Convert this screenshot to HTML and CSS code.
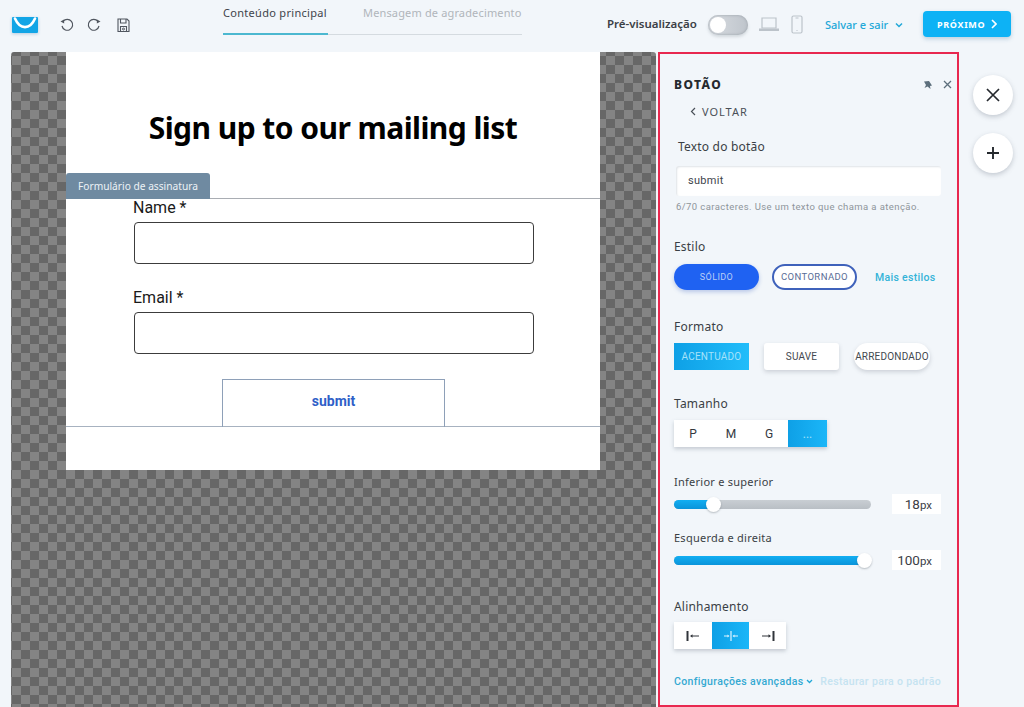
FILE: index.html
```html
<!DOCTYPE html>
<html lang="pt-BR">
<head>
    <meta charset="UTF-8">
    <meta name="viewport" content="width=device-width, initial-scale=1.0">
    <title>Editor de formulário</title>
    <link rel="stylesheet" href="styles.css">
</head>
<body>
    <header class="topbar">
        <div class="tools">
            <svg class="logo" width="26" height="16" viewBox="0 0 26 16"><rect width="26" height="16" rx="1" fill="#12a5e6"/><path d="M3 1.500C8 13 18 13 23 1.500" fill="none" stroke="#fff" stroke-width="2.600" stroke-linecap="round"/></svg>
            <svg class="undo" width="16" height="16" viewBox="0 0 16 16"><path d="M4 4.500a5.400 5.400 0 1 1-1 4.500" fill="none" stroke="#50565f" stroke-width="1.200"/><path d="M1.500 4.500 5 2.600 5.200 6.600z" fill="#50565f"/></svg>
            <svg class="redo" width="16" height="16" viewBox="0 0 16 16"><path d="M12 4.500a5.400 5.400 0 1 0 1 4.500" fill="none" stroke="#50565f" stroke-width="1.200"/><path d="M14.500 4.500 11 2.600 10.800 6.600z" fill="#50565f"/></svg>
            <svg class="save" width="13" height="15" viewBox="0 0 13 15"><path d="M1 1h9l2 2v10.500H1z M3.500 1v4H9V1 M3.500 13.500V8.500h6v5" fill="none" stroke="#50565f" stroke-width="1.100"/><circle cx="6.500" cy="11" r="1" fill="none" stroke="#50565f"/></svg>
        </div>
        <nav class="steps">
            <a class="step active">Conteúdo principal</a>
            <a class="step">Mensagem de agradecimento</a>
        </nav>
        <div class="actions">
            <span class="preview-label">Pré-visualização</span>
            <span class="switch"><span class="knob"></span></span>
            <svg class="laptop" width="20" height="14" viewBox="0 0 20 14"><path d="M3 1h14v10H3z" fill="none" stroke="#bcc3ca" stroke-width="1.200"/><path d="M0 11.500h20V14H0z" fill="#bcc3ca"/></svg>
            <svg class="phone" width="12" height="19" viewBox="0 0 12 19"><rect x="1" y="1" width="10" height="17" rx="1.500" fill="none" stroke="#bcc3ca" stroke-width="1.200"/><path d="M4.500 3h3M5.500 15.500h1" stroke="#bcc3ca"/></svg>
            <a class="save-exit">Salvar e sair <svg width="8" height="6" viewBox="0 0 8 6"><path d="M1 1.500 4 4.500 7 1.500" fill="none" stroke="#22a8d8" stroke-width="1.500"/></svg></a>
            <button class="next">PRÓXIMO <svg width="6" height="10" viewBox="0 0 6 10"><path d="M1 1l4 4-4 4" fill="none" stroke="#fff" stroke-width="1.600"/></svg></button>
        </div>
    </header>

    <main class="workspace">
        <section class="canvas">
            <div class="sheet">
                <h1 class="form-title">Sign up to our mailing list</h1>
                <div class="form-block">
                    <span class="block-tag">Formulário de assinatura</span>
                    <label class="field-label">Name *</label>
                    <div class="field-input"></div>
                    <label class="field-label second">Email *</label>
                    <div class="field-input"></div>
                    <div class="submit-box">submit</div>
                </div>
            </div>
        </section>

        <aside class="panel">
            <div class="panel-head">
                <h2>BOTÃO</h2>
                <div class="panel-icons">
                    <svg width="10" height="10" viewBox="0 0 10 10"><path d="M1 1.500 6 1l3 4.500-2 .5.500 3L4.500 6.500 1.500 8 3 5z" fill="#5d6f7c"/></svg>
                    <svg width="9" height="9" viewBox="0 0 9 9"><path d="M1 1l7 7M8 1 1 8" stroke="#5d6f7c" stroke-width="1.300"/></svg>
                </div>
            </div>
            <a class="back"><svg width="6" height="9" viewBox="0 0 6 9"><path d="M5 1 1.500 4.500 5 8" fill="none" stroke="#4a5058" stroke-width="1.200"/></svg>VOLTAR</a>

            <div class="label label-text">Texto do botão</div>
            <div class="text-input">submit</div>
            <div class="hint">6/70 caracteres. Use um texto que chama a atenção.</div>

            <div class="label label-style">Estilo</div>
            <div class="style-row">
                <span class="pill solid">SÓLIDO</span>
                <span class="pill outline">CONTORNADO</span>
                <a class="more">Mais estilos</a>
            </div>

            <div class="label label-format">Formato</div>
            <div class="format-row">
                <span class="fmt sharp">ACENTUADO</span>
                <span class="fmt soft">SUAVE</span>
                <span class="fmt round">ARREDONDADO</span>
            </div>

            <div class="label label-size">Tamanho</div>
            <div class="segment size">
                <span>P</span><span>M</span><span>G</span><span class="on">...</span>
            </div>

            <div class="label label-pad">Inferior e superior</div>
            <div class="slider-row">
                <div class="track"><div class="fill" style="width: 40px"></div><span class="thumb" style="left: 32px"></span></div>
                <div class="num">18<small>px</small></div>
            </div>

            <div class="label label-pad second">Esquerda e direita</div>
            <div class="slider-row">
                <div class="track"><div class="fill" style="width: 190px"></div><span class="thumb" style="left: 183px"></span></div>
                <div class="num">100<small>px</small></div>
            </div>

            <div class="label label-align">Alinhamento</div>
            <div class="segment align">
                <span><svg width="14" height="10" viewBox="0 0 14 10"><path d="M1.500 0v10" stroke="#30343a" stroke-width="2"/><path d="M5 5h8" stroke="#30343a"/><path d="M4 5l2.500-1.800v3.600z" fill="#30343a"/></svg></span>
                <span class="on"><svg width="14" height="10" viewBox="0 0 14 10"><path d="M7 0v10" stroke="#dff4fe" stroke-width="1.200"/><path d="M0 5h4M10 5h4" stroke="#dff4fe"/><path d="M5.500 5 3.500 3.500v3zM8.500 5l2-1.500v3z" fill="#dff4fe"/></svg></span>
                <span><svg width="14" height="10" viewBox="0 0 14 10"><path d="M12.500 0v10" stroke="#30343a" stroke-width="2"/><path d="M1 5h8" stroke="#30343a"/><path d="M10 5 7.500 3.200v3.600z" fill="#30343a"/></svg></span>
            </div>

            <div class="panel-foot">
                <a class="advanced">Configurações avançadas <svg width="7" height="5" viewBox="0 0 7 5"><path d="M1 1l2.500 2.500L6 1" fill="none" stroke="#22a8d8" stroke-width="1.300"/></svg></a>
                <a class="restore">Restaurar para o padrão</a>
            </div>
        </aside>

        <div class="float-col">
            <button class="round-btn"><svg width="14" height="14" viewBox="0 0 14 14"><path d="M1 1l12 12M13 1 1 13" stroke="#25292e" stroke-width="1.700"/></svg></button>
            <button class="round-btn"><svg width="14" height="14" viewBox="0 0 14 14"><path d="M7 1v12M1 7h12" stroke="#25292e" stroke-width="1.900"/></svg></button>
        </div>
    </main>
</body>
</html>
```

FILE: styles.css
```css
* { box-sizing: border-box; }
html, body { margin: 0; height: 100%; }
body { width: 1024px; height: 707px; overflow: hidden; background: #f2f6fa; color: #33383e;
       font-family: "Noto Sans", "Open Sans", sans-serif; }

/* top bar */
.topbar { height: 52px; display: flex; position: relative; }
.tools { width: 223px; padding: 17px 0 0 12px; display: flex; align-items: flex-start; }
.logo { margin-right: 21px; box-shadow: 0 1px 3px rgba(40, 110, 160, .3); }
.undo { margin: 0 11px 0 0; }
.redo { margin: 0 15px 0 0; }
.save { margin-top: 1px; }
.steps { width: 299px; height: 35px; display: flex; border-bottom: 1px solid #d5dbe0; }
.step { font-size: 11px; letter-spacing: .15px; padding-top: 5px; color: #b0b5ba; white-space: nowrap; }
.step.active { color: #3f444a; letter-spacing: .3px; height: 35px; width: 105px; margin-right: 35px; border-bottom: 2px solid #4cb8d0; }
.actions { flex: 1; display: flex; align-items: flex-start; padding-top: 11px; }
.preview-label { font-size: 11.500px; font-weight: 600; color: #3b4046; margin: 5px 0 0 85px; white-space: nowrap; }
.switch { width: 40px; height: 20px; margin: 4px 11px 0 11px; border-radius: 10px; background: linear-gradient(90deg, #d8dce1, #bfc5cc); position: relative;
          box-shadow: inset 0 0 3px #9aa1a8, 0 2px 3px rgba(120, 130, 140, .25); }
.knob { position: absolute; left: 2px; top: 2px; width: 16px; height: 16px; border-radius: 50%; background: #fff; }
.laptop { margin: 6px 12px 0 0; }
.phone { margin: 4px 22px 0 0; }
.save-exit { font-size: 11px; font-weight: 500; color: #22a8d8; margin: 6px 20px 0 0; white-space: nowrap; }
.save-exit svg { margin-left: 4px; vertical-align: 1px; }
.next { width: 88px; height: 26px; border: 0; border-radius: 4px; background: #0db2f5; color: #fff;
        font: 700 9px "Noto Sans", sans-serif; letter-spacing: .7px; box-shadow: 0 2px 4px rgba(60, 120, 160, .3); }
.next svg { margin-left: 3px; vertical-align: -1px; }

/* canvas */
.workspace { display: flex; height: 655px; }
.canvas { width: 645px; margin-left: 11px; border-radius: 3px 3px 0 0; overflow: hidden;
          background-color: #848484;
          background-image: conic-gradient(#676767 25%, #848484 0 50%, #676767 0 75%, #848484 0);
          background-size: 18px 18px; background-position: 1px 4px; }
.sheet { width: 534px; height: 418px; margin-left: 55px; background: #fff; }
.form-title { margin: 0; height: 146px; padding-top: 56px; text-align: center; color: #000;
              font: 700 30px/40px "Noto Sans", sans-serif; letter-spacing: -.55px; }
.form-block { height: 229px; position: relative; padding: 0 67px 0 68px; border-top: 1px solid #a9adb3; border-bottom: 1px solid #a7b2c0; }
.block-tag { position: absolute; left: 0; top: -26px; width: 144px; height: 26px; padding-left: 12px; border-radius: 3px 3px 0 0;
             background: #6f8aa1; color: #edf2f6; font-size: 10.200px; line-height: 27px; white-space: nowrap; }
.field-label { display: block; height: 23px; margin-left: -1px; font: 16px/18px Roboto, sans-serif; color: #1a1a1a; }
.field-label.second { margin-top: 23px; height: 25px; padding-top: 2px; }
.field-input { width: 400px; height: 42px; border: 1px solid #3c3c3c; border-radius: 4px; background: #fff; }
.submit-box { width: 223px; height: 48px; margin: 25px 0 0 88px; border: 1px solid #8ea0b8; border-bottom: 0; text-align: center;
              font: 700 14px/42px Roboto, sans-serif; color: #2f5fc8; }

/* settings panel, the red frame is part of the shot */
.panel { width: 301px; height: 655px; margin-left: 2px; padding: 0 15px 0 14px; border: 2px solid #e8284f; background: #f2f6fa; position: relative; }
.panel-head { display: flex; justify-content: space-between; padding-top: 23px; height: 47px; }
.panel-head h2 { margin: 0; font-size: 12px; line-height: 16px; font-weight: 800; letter-spacing: 1.400px; color: #25292e; }
.panel-icons { display: flex; gap: 10px; margin: 3px -10px 0 0; align-items: flex-start; }
.back { display: flex; align-items: center; gap: 6px; margin-left: 16px; height: 20px; font-size: 11px; letter-spacing: 1px; color: #4a5058; }
.label { font-size: 12px; line-height: 16px; color: #3a3f45; letter-spacing: .2px; }
.label-text { margin: 18px 0 0 4px; }
.text-input { width: 265px; height: 30px; margin: 11px 0 0 2px; padding-left: 12px; background: #fff; border-radius: 3px; font: 11px/29px Roboto, sans-serif;
              color: #40454b; letter-spacing: .3px; box-shadow: inset 1px 1px 2px #dfe3e7; }
.hint { margin: 4px 0 0 2px; font: 9.500px/14px Roboto, sans-serif; letter-spacing: .41px; color: #8e959b; }
.label-style { margin-top: 25px; }
.style-row { display: flex; align-items: center; margin-top: 9px; }
.pill { height: 26px; border-radius: 13px; font: 9px/26px Roboto, sans-serif; letter-spacing: .4px; text-align: center; }
.solid { width: 85px; background: #1f62f2; color: #b9cdf7; box-shadow: 0 2px 4px rgba(50, 90, 190, .3); }
.outline { width: 85px; margin-left: 13px; border: 2px solid #3f62bb; background: #fff; font-size: 9.500px; line-height: 22px; color: #5a6d96; }
.more { margin-left: 18px; font: 500 10.500px Roboto, sans-serif; letter-spacing: .3px; color: #34b3d8; }
.label-format { margin-top: 29px; }
.format-row { display: flex; margin-top: 8px; gap: 15px; }
.fmt { width: 75px; height: 27px; font: 10px/27px Roboto, sans-serif; letter-spacing: .2px; text-align: center; background: #fff; color: #43484e;
       box-shadow: 0 2px 4px rgba(90, 100, 115, .25); white-space: nowrap; }
.sharp { background: linear-gradient(90deg, #0ea0e6, #22bdfa); color: #a6e2fa; box-shadow: none; }
.soft { border-radius: 3px; }
.round { width: 76px; border-radius: 14px; }
.label-size { margin-top: 26px; }
.segment { display: flex; width: max-content; margin-top: 8px; background: #fff; box-shadow: 0 2px 4px rgba(90, 100, 115, .3); }
.segment span { display: flex; align-items: center; justify-content: center; height: 27px; }
.size span { width: 38px; font: 12px Roboto, sans-serif; color: #33383e; }
.size .on { width: 39px; }
.segment .on { background: linear-gradient(90deg, #0ea0e6, #1bb6f8); color: #a6e2fa; }
.label-pad { margin-top: 27px; font-size: 11px; letter-spacing: .25px; }
.label-pad.second { margin-top: 14px; }
.slider-row { display: flex; align-items: center; justify-content: space-between; margin-top: 2px; height: 24px; width: 267px; }
.track { position: relative; width: 197px; height: 9px; border-radius: 5px; background: linear-gradient(#c9ced3, #b9bfc5); }
.fill { height: 9px; border-radius: 5px; background: linear-gradient(#12aef2, #0a94da); }
.thumb { position: absolute; top: -3px; width: 15px; height: 15px; border-radius: 50%; background: #fff; box-shadow: 0 1px 2px rgba(70, 80, 90, .35); }
.num { width: 49px; height: 20px; padding-right: 9px; background: #fff; text-align: right; font: 13.500px/20px Roboto, sans-serif; color: #3b4046; }
.num small { font-size: 11.500px; }
.label-align { margin-top: 27px; }
.segment.align { margin-top: 7px; }
.align span { width: 37px; }
.align span:first-child { width: 38px; }
.panel-foot { display: flex; justify-content: space-between; width: 267px; margin-top: 26px; font: 500 10.500px Roboto, sans-serif; letter-spacing: .35px; white-space: nowrap; }
.advanced { color: #34a9d2; }
.advanced svg { vertical-align: 1px; }
.restore { color: #c5e3f1; }

/* round buttons at the right */
.float-col { display: flex; flex-direction: column; gap: 18px; margin: 23px 0 0 14px; }
.round-btn { width: 40px; height: 40px; border: 0; padding: 0; border-radius: 50%; background: #fff; box-shadow: 0 2px 5px rgba(90, 100, 115, .3);
             display: flex; align-items: center; justify-content: center; }
```
